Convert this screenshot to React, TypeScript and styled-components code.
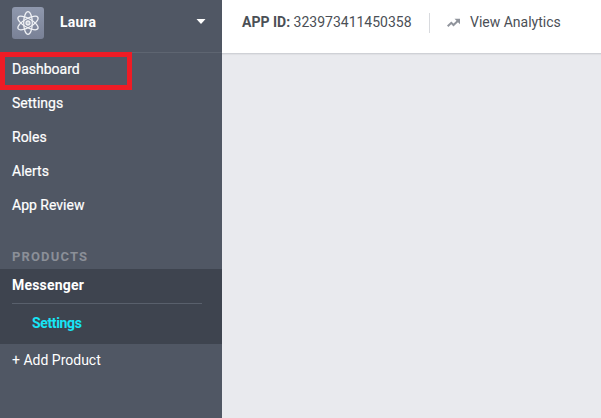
import React from "react";
import styled, { createGlobalStyle } from "styled-components";

const GlobalStyle = createGlobalStyle`
  * { box-sizing: border-box; }
  body {
    margin: 0;
    overflow: hidden;
    background: #e9eaee;
    font-family: Roboto, "Liberation Sans", sans-serif;
    font-size: 14px;
  }
`;

const Page = styled.div`
  display: flex;
  height: 100vh;
`;

const Sidebar = styled.aside`
  flex: 0 0 222px;
  display: flex;
  flex-direction: column;
  background: #505764;
  color: #fff;
`;

const AppSwitcher = styled.div`
  height: 53px;
  padding: 0 16px 7px 12px;
  display: flex;
  align-items: center;
  border-bottom: 1px solid #5e6571;
`;

const AppIcon = styled.div`
  width: 32px;
  height: 32px;
  border-radius: 3px;
  background: linear-gradient(#8f98ad, #798196);
  display: flex;
  align-items: center;
  justify-content: center;
`;

const AppName = styled.div`
  flex: 1;
  height: 20px;
  margin-left: 16px;
  font-weight: 700;
  letter-spacing: 0.2px;
  line-height: 18px;
`;

const Caret = styled.svg`
  display: block;
  margin-top: -3px;
`;

const Nav = styled.nav`
  display: flex;
  flex-direction: column;
`;

const NavItem = styled.a`
  position: relative;
  height: 34px;
  padding-left: 12px;
  line-height: 32px;
  -webkit-text-stroke: 0.2px #fff;
`;

const Highlight = styled.span`
  position: absolute;
  left: 0;
  top: -1px;
  width: 132px;
  height: 38px;
  border: 5px solid #ee1c25;
  z-index: 1;
`;

const SectionTitle = styled.div`
  height: 46px;
  padding: 24px 12px 0;
  line-height: 20px;
  font-size: 13px;
  font-weight: 700;
  letter-spacing: 1.15px;
  color: #8b8f98;
`;

const ProductGroup = styled.section`
  height: 75px;
  padding: 0 20px 0 12px;
  background: #3e444f;
  font-weight: 700;
`;

const ProductName = styled.div`
  height: 35px;
  line-height: 33px;
  letter-spacing: 0.2px;
  border-bottom: 1px solid #59606c;
`;

const ProductLink = styled.div`
  padding-left: 20px;
  line-height: 38px;
  letter-spacing: -0.35px;
  color: #17e5f6;
`;

const AddProduct = styled.div`
  padding-left: 12px;
  line-height: 32px;
`;

const Main = styled.main`
  flex: 1;
`;

const TopBar = styled.header`
  height: 54px;
  padding: 0 0 8px 20px;
  display: flex;
  align-items: center;
  background: #fff;
  border-bottom: 1px solid #cfd1d6;
  box-shadow: 0 1px 1px rgba(0, 0, 0, 0.04);
  color: #4b4f56;
  white-space: pre;
`;

const AppId = styled.div`
  width: 187px;
  height: 20px;
  line-height: 18px;
`;

const Label = styled.span`
  font-weight: 700;
`;

const Analytics = styled.a`
  display: flex;
  align-items: center;
  height: 20px;
  padding-left: 17px;
  border-left: 1px solid #d8dade;
  gap: 9px;
`;

const AnalyticsLabel = styled.span`
  height: 20px;
  line-height: 18px;
`;

const links = ["Dashboard", "Settings", "Roles", "Alerts", "App Review"];

export default function App() {
  return (
    <Page>
      <GlobalStyle />
      <Sidebar>
        <AppSwitcher>
          <AppIcon>
            <svg width="26" height="26" viewBox="0 0 26 26" fill="none" stroke="#eef0f4" strokeWidth="1.3">
              {[0, 60, 120].map((angle) => (
                <ellipse key={angle} cx="13" cy="13" rx="4.3" ry="11.4" transform={`rotate(${angle} 13 13)`} />
              ))}
              <circle cx="13" cy="13" r="2" fill="#c3c9d4" />
            </svg>
          </AppIcon>
          <AppName>Laura</AppName>
          <Caret width="10" height="5" viewBox="0 0 10 5">
            <path d="M.5 0h9L5.5 4.6q-.5.5-1 0z" fill="#fff" />
          </Caret>
        </AppSwitcher>
        <Nav>
          {links.map((label) => (
            <NavItem key={label}>
              {label}
              {label === "Dashboard" && <Highlight />}
            </NavItem>
          ))}
        </Nav>
        <SectionTitle>PRODUCTS</SectionTitle>
        <ProductGroup>
          <ProductName>Messenger</ProductName>
          <ProductLink>Settings</ProductLink>
        </ProductGroup>
        <AddProduct>+ Add Product</AddProduct>
      </Sidebar>
      <Main>
        <TopBar>
          <AppId><Label>APP ID:</Label> 323973411450358</AppId>
          <Analytics>
            <svg width="14" height="10" viewBox="0 0 14 10" fill="none">
              <path d="M.7 8.2 4.3 4.8 6.5 7 11 2.7" stroke="#90949c" strokeWidth="2" />
              <path d="M7.5.8H13v5.4z" fill="#90949c" />
            </svg>
            <AnalyticsLabel>View Analytics</AnalyticsLabel>
          </Analytics>
        </TopBar>
      </Main>
    </Page>
  );
}
